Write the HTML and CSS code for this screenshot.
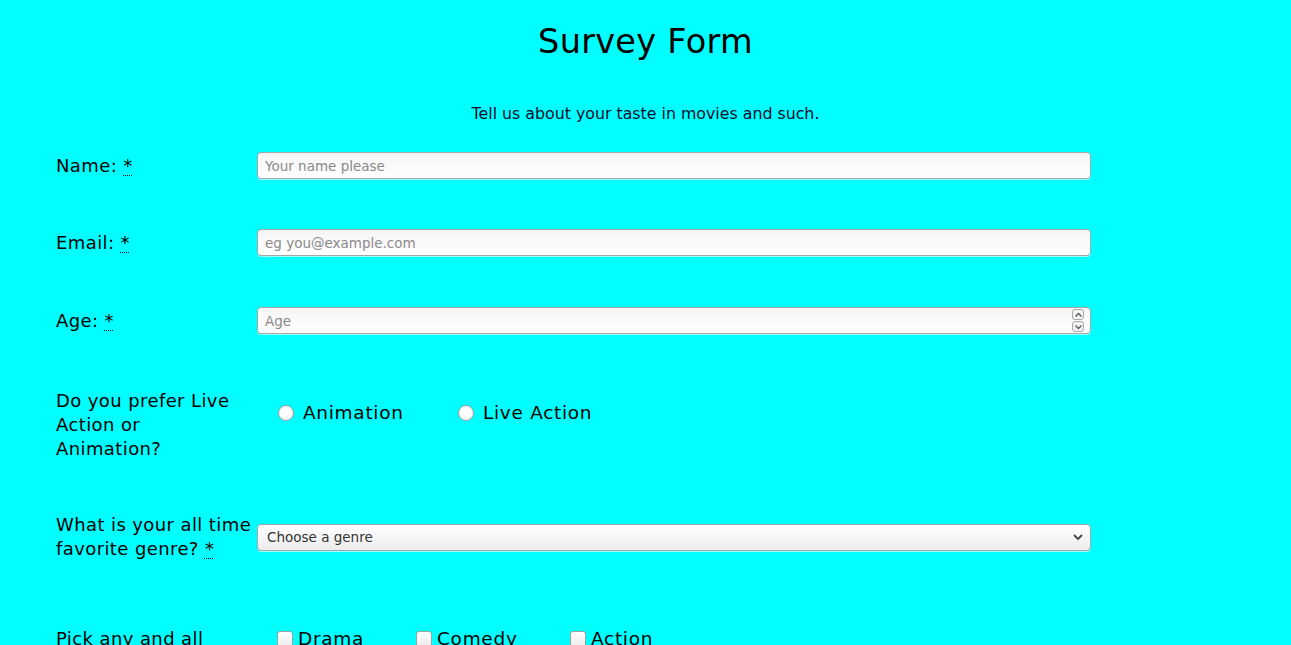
FILE: index.html
```html
<!DOCTYPE html>
<html lang="en">
<head>
<meta charset="utf-8">
<title>Survey Form</title>
<link rel="stylesheet" href="styles.css">
</head>
<body>
<header class="page-head">
  <h1 class="title">Survey Form</h1>
  <p class="desc">Tell us about your taste in movies and such.</p>
</header>
<form class="survey">
  <div class="row r-name">
    <label class="lbl" for="name">Name: <abbr title="required">*</abbr></label>
    <input class="field" id="name" type="text" placeholder="Your name please">
  </div>
  <div class="row r-email">
    <label class="lbl" for="email">Email: <abbr title="required">*</abbr></label>
    <input class="field" id="email" type="email" placeholder="eg you@example.com">
  </div>
  <div class="row r-age">
    <label class="lbl" for="age">Age: <abbr title="required">*</abbr></label>
    <div class="field num">
      <span class="ph">Age</span>
      <span class="spin"><span class="sb">
        <svg width="9" height="6" viewBox="0 0 9 6"><path d="M1.5 4.5 L4.5 1.5 L7.5 4.5" fill="none" stroke="#555" stroke-width="1.3"/></svg>
      </span><span class="sb">
        <svg width="9" height="6" viewBox="0 0 9 6"><path d="M1.5 1.5 L4.5 4.5 L7.5 1.5" fill="none" stroke="#555" stroke-width="1.3"/></svg>
      </span></span>
    </div>
  </div>
  <div class="row top r-pref">
    <div class="lbl">Do you prefer Live Action or<br>Animation?</div>
    <div class="opts radios">
      <label class="opt"><span class="radio"></span>Animation</label>
      <label class="opt"><span class="radio"></span>Live Action</label>
    </div>
  </div>
  <div class="row r-genre">
    <label class="lbl" for="genre">What is your all time favorite genre? <abbr title="required">*</abbr></label>
    <div class="field select" id="genre">
      <span>Choose a genre</span>
      <svg width="12" height="8" viewBox="0 0 12 8"><path d="M2 2 L6 6 L10 2" fill="none" stroke="#444" stroke-width="1.8"/></svg>
    </div>
  </div>
  <div class="row top r-checks">
    <div class="lbl">Pick any and all</div>
    <div class="opts checks">
      <label class="opt c1"><span class="check"></span>Drama</label>
      <label class="opt c2"><span class="check"></span>Comedy</label>
      <label class="opt c3"><span class="check"></span>Action</label>
    </div>
  </div>
</form>
</body>
</html>
```
FILE: styles.css
```css
html, body {
  margin: 0;
  padding: 0;
  background: #00ffff;
  overflow: hidden;
}
body {
  font-family: "DejaVu Sans", "Open Sans", sans-serif;
  color: #000;
  height: 645px;
}
.page-head {
  text-align: center;
}
.title {
  margin: 0;
  padding-top: 22px;
  font-size: 33.5px;
  font-weight: 400;
  line-height: 40px;
  letter-spacing: 0.3px;
}
.desc {
  margin: 42px 0 0;
  font-size: 15.8px;
  line-height: 20px;
  color: #0a0a2a;
}
.survey {
  padding: 28px 0 0 56px;
}
.row {
  display: flex;
  align-items: center;
  width: 1035px;
}
.row.top {
  align-items: flex-start;
}
.r-name { margin-bottom: 50px; }
.r-email { margin-bottom: 51px; }
.r-age { margin-bottom: 55px; }
.r-pref { margin-bottom: 52px; }
.r-genre { margin-bottom: 66px; }
.lbl {
  flex: 0 0 201px;
  font-size: 18px;
  line-height: 24px;
  letter-spacing: 0.4px;
}
abbr {
  text-decoration: underline dotted;
  text-underline-offset: 3px;
  text-decoration-thickness: 1px;
}
.field {
  box-sizing: border-box;
  width: 834px;
  height: 27px;
  border: 1px solid #a6a6a6;
  border-radius: 4px;
  background: linear-gradient(#f5f5f5, #ffffff);
  font-family: "DejaVu Sans", sans-serif;
  font-size: 13.5px;
  padding: 0 7px;
  color: #333;
  box-shadow: 0 1px 0 rgba(255,255,255,0.6);
}
.field::placeholder {
  color: #8a8a8a;
}
.num {
  display: flex;
  align-items: center;
  justify-content: space-between;
  padding-right: 6px;
}
.ph {
  color: #8a8a8a;
}
.spin {
  display: flex;
  flex-direction: column;
  gap: 1px;
}
.sb {
  box-sizing: border-box;
  width: 12px;
  height: 11px;
  border: 1px solid #a9a9a9;
  border-radius: 3px;
  background: #f4f4f4;
  display: flex;
  align-items: center;
  justify-content: center;
}
.radios {
  padding-top: 12px;
  display: flex;
}
.opt {
  display: flex;
  align-items: center;
  font-size: 18.5px;
  line-height: 24px;
  letter-spacing: 0.7px;
}
.radios .opt {
  margin-left: 21px;
  width: 159px;
}
.radio {
  box-sizing: border-box;
  width: 16px;
  height: 16px;
  border-radius: 50%;
  border: 1px solid #a0a0a0;
  background: radial-gradient(circle at 50% 40%, #ffffff 40%, #ececec);
  margin-right: 9px;
}
.select {
  display: flex;
  align-items: center;
  justify-content: space-between;
  background: linear-gradient(#ffffff, #ececec);
  color: #333;
  padding-left: 9px;
  padding-right: 6px;
  font-size: 13.5px;
}
.checks {
  display: flex;
}
.check {
  box-sizing: border-box;
  width: 16px;
  height: 16px;
  border-radius: 3px;
  border: 1px solid #a0a0a0;
  background: linear-gradient(#ffffff, #ececec);
  margin-right: 5px;
}
.c1 { margin-left: 20px; width: 139px; }
.c2 { width: 154px; }
.c3 { width: 120px; }
```
